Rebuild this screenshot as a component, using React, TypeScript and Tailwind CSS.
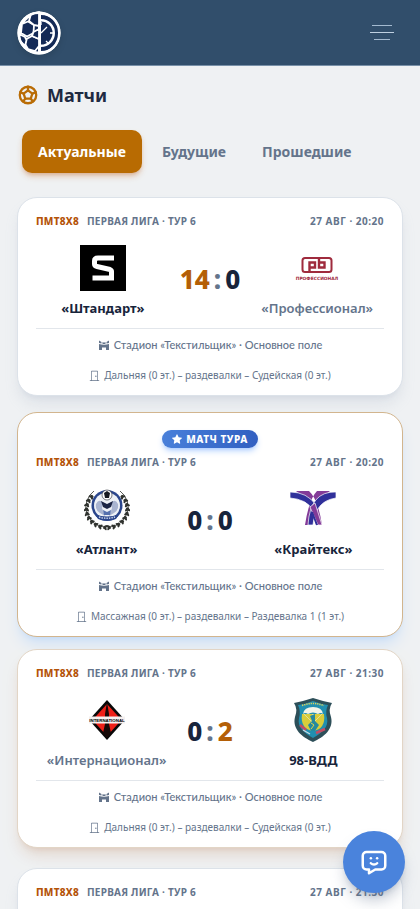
import type { ReactNode } from "react";
import { BsDoorClosed, BsStarFill } from "react-icons/bs";
import { TbBallFootball, TbMessageChatbot } from "react-icons/tb";

type Team = { name: string; crest: ReactNode; score: number };
type Match = {
  date: string;
  home: Team;
  away: Team;
  rooms: string;
  featured?: boolean;
  className: string;
};

function BrandLogo() {
  return (
    <svg viewBox="0 0 44 44" className="size-11 drop-shadow-md" aria-hidden="true">
      <circle cx="22" cy="22" r="21.5" fill="#fff" />
      <path d="M21 3.5A18.6 18.6 0 0 0 21 40.500Z" fill="#142a56" />
      <g fill="#142a56" stroke="#fff" strokeWidth="1.8" strokeLinejoin="round">
        <path d="M5 13 11 10.500 17 14 16.500 22 10 25.500 4 22Z" />
        <path d="M14 3 22 1V15L17 14 12 10Z" />
        <path d="M9.500 28 15 25 22 28V35L18 40 11 38 8 33Z" />
        <path d="M16.500 21 22 18V28L15 25Z" />
        <path d="M2 23 8 26 9.500 29 8 35 3 30Z" />
      </g>
      <path d="M24 4A18 18 0 0 1 24 40V36A14 14 0 0 0 24 8Z" fill="#142a56" />
      <path d="M24 10.500A11.500 11.500 0 0 1 24 33.500Z" fill="#142a56" />
      <path d="M24 22 30 16M33 22h3M29 30l2 2M24 11v3" stroke="#fff" strokeWidth="1.300" />
      <circle cx="22" cy="22" r="20.300" fill="none" stroke="#fff" strokeWidth="2.500" />
    </svg>
  );
}

function StandartCrest() {
  return (
    <svg viewBox="0 0 46 46" className="size-full" aria-hidden="true">
      <path d="M0 0h46v46H0z" />
      <path
        d="M34 13H18Q14.500 13 14.500 16V19Q14.500 21 17 21.500L30 24.500Q31.500 25 31.500 26.500V33H12.500"
        fill="none"
        stroke="#fff"
        strokeWidth="5"
      />
    </svg>
  );
}

function ProfessionalCrest() {
  return (
    <svg viewBox="0 0 46 46" className="size-full" aria-hidden="true">
      <g fill="none" stroke="#9f2b3d">
        <rect x="8.500" y="13" width="29" height="14" rx="2.500" strokeWidth="2" />
        <path d="M15.500 26.500V17.500h5.500v5h-5.500M25 13.500v9h5.500v-5H25" strokeWidth="2.400" />
      </g>
      <text
        x="23"
        y="35"
        textAnchor="middle"
        fill="#9f2b3d"
        fontSize="4.400"
        fontWeight="700"
        fontFamily="'DejaVu Sans', sans-serif"
      >
        ПРОФЕССИОНАЛ
      </text>
    </svg>
  );
}

const LEAVES = [100, 114, 128, 142, 156, 170, 184, 198, 212, 226];

function AtlantCrest() {
  return (
    <svg viewBox="0 0 46 46" className="size-full" aria-hidden="true">
      {[1, -1].map((side) => (
        <g key={side} transform={side === 1 ? undefined : "translate(46 0) scale(-1 1)"}>
          <path d="M10 5A20 20 0 0 0 20 41" fill="none" stroke="#30332f" strokeWidth="0.800" />
          {LEAVES.map((angle) => {
            const rad = (angle * Math.PI) / 180;
            const x = 23 + 20.5 * Math.cos(rad);
            const y = 23 + 18.5 * Math.sin(rad);
            return (
              <g key={angle} transform={`translate(${x} ${y}) rotate(${angle})`} fill="#30332f">
                <ellipse cx="1.500" cy="-1" rx="2.500" ry="1.200" transform="rotate(-40)" />
                <ellipse cx="-1.500" cy="-1" rx="2.500" ry="1.200" transform="rotate(40)" />
              </g>
            );
          })}
        </g>
      ))}
      <circle cx="23" cy="19.500" r="15.500" fill="#2b468c" />
      <circle cx="23" cy="19.500" r="13" fill="#eef1f6" />
      <path d="M12 18q3-6 7-1l-1 5 3 8-5-3q-5-3-4-9ZM34 18q-3-6-7-1l1 5-3 8 5-3q5-3 4-9Z" fill="#a9b4d0" />
      <path d="M17 15l6 3 6-3-2 6-4 2-4-2Z" fill="#1c2545" />
      <path d="M19 24l4 2 4-2-1 5h-6Z" fill="#5570ad" />
      <circle cx="23" cy="9" r="5" fill="#fff" stroke="#20242c" strokeWidth="0.600" />
      <path d="m23 5 3 2-1 5h-4l-1-5Z" fill="#15181f" />
      <path d="M11 28q12 5 24 0l-3 5q-9 3-18 0Z" fill="#2b468c" />
      <path d="M15 31q8 2.500 16 0" stroke="#c4cfe7" strokeWidth="1.500" strokeDasharray="1.500 1" fill="none" />
    </svg>
  );
}

function KraitexCrest() {
  return (
    <svg viewBox="0 0 46 46" className="size-full" aria-hidden="true">
      <path d="M6 5h13q9 8 13 34h-6Q24 17 6 5ZM40 5H27q-8 8-12 34h5Q23 17 40 5Z" fill="#833b98" />
      <path d="M0 6q17 0 26 13L23 24Q16 13 0 12Z" fill="#30309a" stroke="#fff" strokeWidth="0.700" />
      <path d="M46 6Q20 5 18 39h5q2-24 23-27Z" fill="#30309a" stroke="#fff" strokeWidth="0.700" />
      <path d="m20 21 5-4 7 22h-4Z" fill="#833b98" stroke="#fff" strokeWidth="0.700" />
      <path d="m22 26 5 13" stroke="#30309a" strokeWidth="2" />
    </svg>
  );
}

function InternationalCrest() {
  return (
    <svg viewBox="0 0 46 46" className="size-full" aria-hidden="true">
      <path d="m23 3 18 20-18 20L5 23Z" fill="#080808" />
      <path d="M23 7 37.500 23 23 39 8.500 23Z" fill="#ee2018" />
      <path d="m23 5 2 12v10l2 9-4 5-4-5 2-9V17Z" fill="#160807" />
      <path d="M5 19.500h36v7H5z" fill="#f4f0ef" />
      <text
        x="23"
        y="24.800"
        textAnchor="middle"
        fontSize="4.400"
        fontWeight="700"
        fontFamily="'Liberation Sans', sans-serif"
      >
        INTERNATIONAL
      </text>
    </svg>
  );
}

function VddCrest() {
  return (
    <svg viewBox="0 0 46 46" className="size-full" aria-hidden="true">
      <path d="M4 6Q14 4 23 1q9 3 19 5-4 6-1 14c3 12-7 20-18 25C12 40 2 32 5 20Q8 12 4 6Z" fill="#2d4f59" />
      <path d="M8 8q8-1 15-4 7 3 15 4-3 6-1 13c2 9-5 15-14 20C14 36 7 30 9 21q2-7-1-13Z" fill="#218fb0" />
      <path d="M12 8.500q11-4 22 0" fill="none" stroke="#ddd45b" strokeWidth="1.500" strokeDasharray="1.300 0.900" />
      <path d="M12 17q-2 15 11 17 13-2 11-17Z" fill="#d9cd3b" />
      <path d="M13 17q1-7 10-7t10 7q-2-2-5 0-5-3-10 0-3-2-5 0Z" fill="#f2f4e9" />
      <path d="m14 17 8 8 1-8 1 8 8-8" fill="none" stroke="#e9edda" strokeWidth="0.600" />
      <path d="m20 19 5-2v7l4 4-4 6h-4l-3-6 4-4Z" fill="#268aa0" />
      <path d="m21 26 3 2-3 4" fill="none" stroke="#ddd34b" />
      <path d="m10 28 6 5M26 36l9-4" stroke="#c54b62" strokeWidth="2.500" />
      <path d="m13 33 7 4" stroke="#c8dbe4" strokeWidth="1.200" />
    </svg>
  );
}

function StadiumIcon() {
  return (
    <svg viewBox="0 0 12 12" className="size-3 shrink-0" fill="currentColor" aria-hidden="true">
      <path d="M1 5q5 1.500 10 0v6H8V8.500H4V11H1Z" />
      <path d="M1 1.500 3.500 3v1.500L1 4ZM11 1.500 8.500 3v1.500L11 4ZM4.500 3l1 .5h1l1-.5v2h-3Z" />
    </svg>
  );
}

const MATCHES: Match[] = [
  {
    date: "27 АВГ · 20:20",
    home: { name: "«Штандарт»", crest: <StandartCrest />, score: 14 },
    away: { name: "«Профессионал»", crest: <ProfessionalCrest />, score: 0 },
    rooms: "Дальняя (0 эт.) – раздевалки – Судейская (0 эт.)",
    className: "border-[#dce2e9] shadow-lg shadow-slate-400/20",
  },
  {
    date: "27 АВГ · 20:20",
    home: { name: "«Атлант»", crest: <AtlantCrest />, score: 0 },
    away: { name: "«Крайтекс»", crest: <KraitexCrest />, score: 0 },
    rooms: "Массажная (0 эт.) – раздевалки – Раздевалка 1 (1 эт.)",
    featured: true,
    className: "mt-4 border-[#d2b58e] shadow-lg shadow-blue-400/20",
  },
  {
    date: "27 АВГ · 21:30",
    home: { name: "«Интернационал»", crest: <InternationalCrest />, score: 0 },
    away: { name: "98-ВДД", crest: <VddCrest />, score: 2 },
    rooms: "Дальняя (0 эт.) – раздевалки – Судейская (0 эт.)",
    className: "mt-3 border-[#e2d5c6] shadow-lg shadow-amber-800/15",
  },
  {
    date: "27 АВГ · 21:30",
    home: { name: "«Штандарт»", crest: <StandartCrest />, score: 0 },
    away: { name: "«Атлант»", crest: <AtlantCrest />, score: 0 },
    rooms: "Дальняя (0 эт.) – раздевалки – Судейская (0 эт.)",
    className: "mt-5 border-[#dce2e9] shadow-lg shadow-slate-400/20",
  },
];

function TeamBlock({ team, lost }: { team: Team; lost: boolean }) {
  return (
    <div className="flex min-w-0 flex-col items-center">
      <div className="size-[46px]">{team.crest}</div>
      <h2
        className={
          lost
            ? "mt-2 text-[13px] leading-[18px] font-semibold whitespace-nowrap text-[#64748b]"
            : "mt-2 text-[13px] leading-[18px] font-bold whitespace-nowrap text-[#17243b]"
        }
      >
        {team.name}
      </h2>
    </div>
  );
}

function MatchCard({ match }: { match: Match }) {
  const { home, away } = match;
  return (
    <article className={`rounded-[20px] border bg-white px-[18px] pt-[15px] pb-3 ${match.className}`}>
      {match.featured && (
        <div className="mb-1.5 flex justify-center pt-0.5">
          <span className="flex h-[18px] items-center gap-1 rounded-full bg-linear-to-r from-[#4980da] to-[#315fc1] px-2.5 text-[10px] font-extrabold tracking-wider text-white shadow-md shadow-blue-500/30">
            <BsStarFill className="size-2.5" />
            МАТЧ ТУРА
          </span>
        </div>
      )}
      <div className="flex h-4 items-center justify-between text-[10px] font-bold tracking-wide whitespace-nowrap text-[#64748b]">
        <div className="flex gap-2">
          <span className="font-extrabold text-[#b45309]">ПМТ8Х8</span>
          <span>ПЕРВАЯ ЛИГА · ТУР 6</span>
        </div>
        <time className="tracking-wider">{match.date}</time>
      </div>
      <div className="mt-4 grid grid-cols-[1fr_auto_1fr] items-center gap-2.5">
        <TeamBlock team={home} lost={home.score < away.score} />
        <div className="flex items-center gap-1 pb-1 text-[26px] leading-8 font-extrabold text-[#17243b]">
          <span className={home.score > away.score ? "text-[#b45f06]" : ""}>{home.score}</span>
          <span className="text-[#64748b]">:</span>
          <span className={away.score > home.score ? "text-[#b45f06]" : ""}>{away.score}</span>
        </div>
        <TeamBlock team={away} lost={away.score < home.score} />
      </div>
      <div className="mt-[11px] border-t border-[#e2e6eb] pt-2 text-[#64748b]">
        <p className="flex h-4 items-center justify-center gap-1 font-[Lato,sans-serif] text-[11px] font-medium whitespace-nowrap">
          <StadiumIcon />
          Стадион «Текстильщик» · Основное поле
        </p>
        <p className="mt-[14px] flex h-4 items-center justify-center gap-1 text-[10px] whitespace-nowrap">
          <BsDoorClosed className="size-[11px] shrink-0" />
          {match.rooms}
        </p>
      </div>
    </article>
  );
}

export default function App() {
  return (
    <div className="min-h-screen bg-[#eff1f3] font-['Noto_Sans',sans-serif]">
      <header className="flex h-[66px] items-center justify-between border-b border-[#7890a8] bg-[#314e6b] pr-[26px] pl-[17px]">
        <a href="#" aria-label="Главная">
          <BrandLogo />
        </a>
        <button type="button" aria-label="Меню" className="flex w-6 flex-col items-center gap-1.5">
          <span className="h-px w-5 bg-[#a4bad0]" />
          <span className="h-px w-6 bg-[#bfd0e1]" />
          <span className="h-px w-4 bg-[#a4bad0]" />
        </button>
      </header>
      <main className="px-[17px] pt-[15px] pb-6">
        <div className="flex items-center gap-2">
          <TbBallFootball className="size-[22px] text-[#b96c05]" strokeWidth={2.5} />
          <h1 className="text-[18px] leading-7 font-bold text-[#1e2a41]">Матчи</h1>
        </div>
        <nav className="mt-[21px] flex gap-1 px-[5px] text-sm font-bold">
          <button
            type="button"
            className="h-[43px] rounded-[10px] bg-[#b86b02] px-4 text-white shadow-md shadow-amber-700/30"
          >
            Актуальные
          </button>
          <button type="button" className="h-[43px] px-4 text-[#64748b]">
            Будущие
          </button>
          <button type="button" className="h-[43px] px-4 text-[#64748b]">
            Прошедшие
          </button>
        </nav>
        <section className="mt-6" aria-label="Список матчей">
          {MATCHES.map((match, index) => (
            <MatchCard key={index} match={match} />
          ))}
        </section>
      </main>
      <button
        type="button"
        aria-label="Открыть чат"
        className="fixed right-[15px] bottom-4 flex size-[62px] items-center justify-center rounded-full bg-[#4a83dc] text-white shadow-lg shadow-slate-500/40"
      >
        <TbMessageChatbot className="size-[30px]" />
      </button>
    </div>
  );
}
